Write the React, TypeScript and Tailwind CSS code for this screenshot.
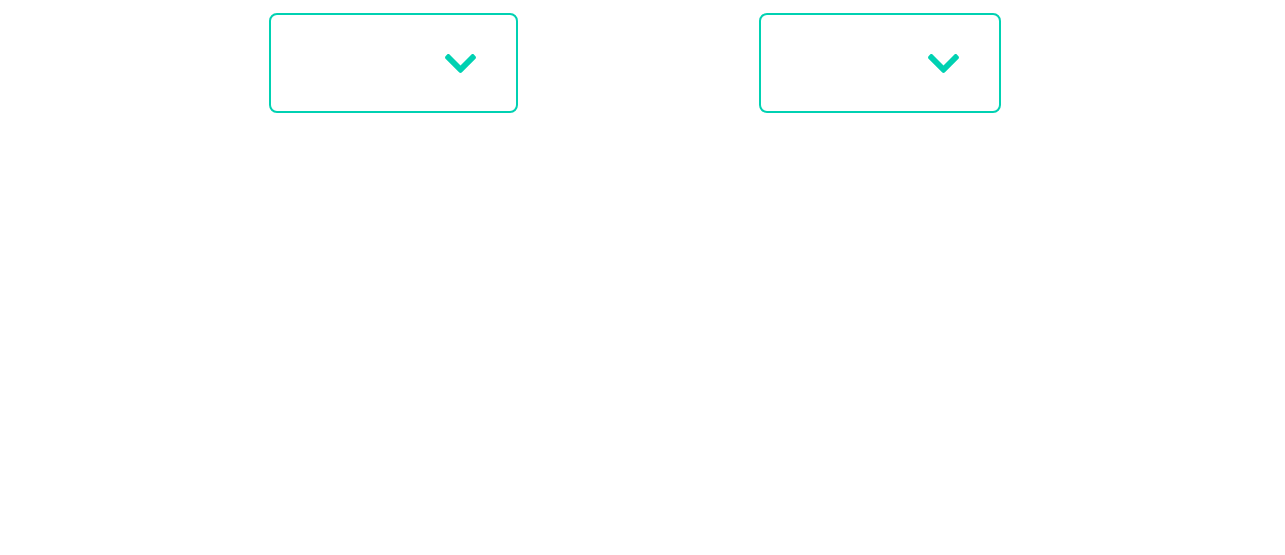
function Chevron() {
  return (
    <svg
      width="31"
      height="19"
      viewBox="5 122 438 268"
      className="text-[#00d1b2]"
      fill="currentColor"
    >
      <path d="M207.029 381.476L12.686 187.132c-9.373-9.373-9.373-24.569 0-33.941l22.667-22.667c9.357-9.357 24.522-9.375 33.901-.04L224 284.505l154.745-154.021c9.379-9.335 24.544-9.317 33.901.04l22.667 22.667c9.373 9.373 9.373 24.569 0 33.941L240.971 381.476c-9.373 9.372-24.569 9.372-33.942 0z" />
    </svg>
  );
}

function SelectBox({ width }: { width: string }) {
  return (
    <div
      className={`${width} h-[100px] pr-[40px] flex items-center justify-end rounded-[8px] border-2 border-[#00d1b2] bg-white`}
    >
      <Chevron />
    </div>
  );
}

export default function App() {
  return (
    <div className="w-[1285px] h-[555px] bg-white pt-[13px] pl-[269px] flex items-start gap-[241px]">
      <SelectBox width="w-[249px]" />
      <SelectBox width="w-[242px]" />
    </div>
  );
}
